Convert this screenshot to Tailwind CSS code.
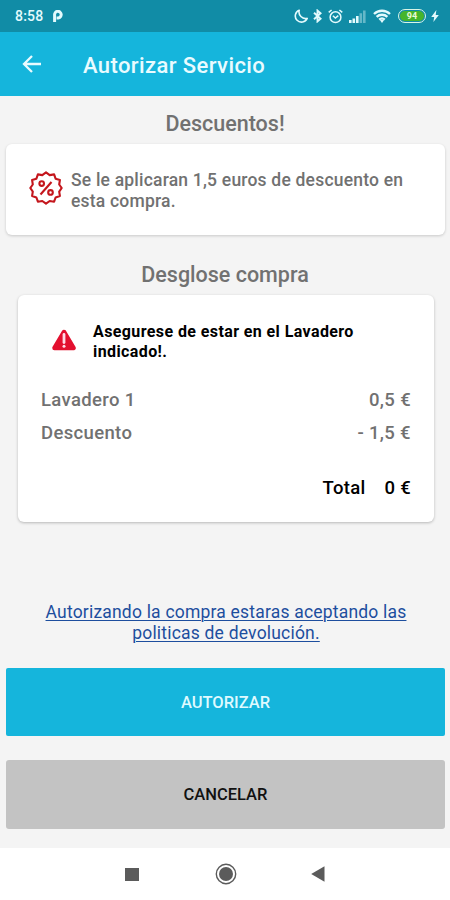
<!DOCTYPE html>
<html lang="es">
<head>
<meta charset="utf-8">
<title>Autorizar Servicio</title>
<script src="https://cdn.jsdelivr.net/npm/@tailwindcss/browser@4"></script>
</head>
<body class="w-[450px] h-[900px] overflow-hidden flex flex-col bg-[#f4f4f4] font-[Roboto,sans-serif] font-medium text-[#717171]">
  <div class="h-8 shrink-0 bg-[#118ca6] text-[#e3fafd] flex items-center pl-[15px] pr-[11px]">
    <span class="text-[14px] tracking-[0.2px] w-[38px] whitespace-nowrap">8:58</span>
    <svg class="w-[10px] h-[12px]" viewBox="0 0 10 12" fill="none" stroke="currentColor" stroke-width="3"><path d="M1.6 12V5A3.3 3.3 0 1 1 5.2 7.9H3.6"/></svg>
    <div class="ml-auto flex items-center">
      <svg class="w-[14px] h-[14px] mr-[5px]" viewBox="0 0 14 14" fill="none" stroke="currentColor" stroke-width="1.6" stroke-linejoin="round"><path d="M5.2 1.2A6.2 6.2 0 1 0 13.2 9.4A6.7 6.7 0 0 1 5.2 1.2Z"/></svg>
      <svg class="w-[9px] h-[14px] mr-[6px]" viewBox="0 0 9 14" fill="none" stroke="currentColor" stroke-width="1.9"><path d="M1 3.8L7.6 9.8L4.5 12.4V1.6L7.6 4.2L1 10.2"/></svg>
      <svg class="w-[15px] h-[15px] mr-[6px]" viewBox="0 0 15 15" fill="none" stroke="currentColor" stroke-width="1.5"><circle cx="7.5" cy="8.2" r="5.4"/><path d="M.7 3.4L3.6 1M14.3 3.4L11.4 1M4.9 6.8L7.4 9L10.3 6.6"/></svg>
      <svg class="w-[17px] h-[13px] mr-[7px]" viewBox="0 0 17 13" fill="currentColor"><path d="M0 10h2.6v3H0zM3.5 8.4h2.6V13H3.5zM7 6h2.6v7H7z"/><path opacity=".4" d="M10.5 3.3h2.6V13h-2.6zM14 .5h2.6V13H14z"/></svg>
      <svg class="w-[18px] h-[14px] mr-[7px]" viewBox="0 0 18 14" fill="none" stroke="currentColor" stroke-width="2.3"><path d="M1 5A11.5 11.5 0 0 1 17 5M3.6 7.9A7.8 7.8 0 0 1 14.4 7.9M6.2 10.6A4.2 4.2 0 0 1 11.8 10.6"/><path d="M9 14L7 11.3Q9 9.8 11 11.3Z" fill="currentColor" stroke="none"/></svg>
      <div class="w-[28px] h-[14px] rounded-full border-[1.5px] border-[#d9f5e6] p-px mr-[5px]"><div class="h-full rounded-full bg-[#46b52c] text-[#e9fbd9] text-[9px] leading-[10.5px] font-bold text-center">94</div></div>
      <svg class="w-[8px] h-[12px]" viewBox="0 0 8 12" fill="currentColor"><path d="M5.4 0L.2 6.9H3.2L2.4 12L7.8 4.9H4.7Z"/></svg>
    </div>
  </div>
  <header class="h-16 shrink-0 bg-[#15b5dc] text-[#e9fbff] flex items-center pl-[22px]">
    <svg class="w-[20px] h-[18px] mr-[41px]" viewBox="0 0 20 18" fill="none" stroke="currentColor" stroke-width="2.3"><path d="M19 9H2.5M10 1L2 9L10 17"/></svg>
    <h1 class="text-[22px] leading-8 pt-[3px] tracking-[0.4px] whitespace-nowrap">Autorizar Servicio</h1>
  </header>
  <main class="h-[752px] shrink-0 flex flex-col px-[6px]">
    <h2 class="pt-[15px] text-[21.5px] leading-[26px] text-center">Descuentos!</h2>
    <section class="mt-[7px] h-[91px] w-[439px] rounded-[6px] bg-white shadow-[0_1px_3px_rgba(0,0,0,0.18)] flex items-start pl-[23px] pt-[26px]">
      <svg class="w-[34px] h-[34px] mr-[8px] mt-[1px]" viewBox="0 0 34 34" fill="none" stroke="#c4161c" stroke-width="2.1" stroke-linejoin="round"><path d="M17 1.3L20.7 4.1L25.1 3.4L26.6 7.7L30.9 9L30.2 13.5L32.7 17L30.2 20.7L30.9 25L26.6 26.5L25.1 30.7L20.7 30L17 32.7L13.3 30L8.9 30.7L7.4 26.5L3.1 25L3.8 20.7L1.3 17L3.8 13.5L3.1 9L7.4 7.7L8.9 3.4L13.3 4.1Z"/><path d="M22.5 11L11.5 23.5"/><circle cx="12.7" cy="12.6" r="2.3"/><circle cx="21.5" cy="21.4" r="2.3"/></svg>
      <p class="text-[17.5px] leading-[21px] tracking-[0.2px] whitespace-nowrap">Se le aplicaran 1,5 euros de descuento en<br>esta compra.</p>
    </section>
    <h2 class="mt-[27px] text-[21.5px] leading-[26px] text-center">Desglose compra</h2>
    <section class="mt-[7px] ml-[12px] w-[416px] h-[227px] rounded-[6px] bg-white shadow-[0_1px_3px_rgba(0,0,0,0.25)] px-[23px] pt-[26px]">
      <div class="flex items-start text-black h-[64px]">
        <svg class="w-[24px] h-[22px] ml-[11px] mt-[8px] mr-[17px]" viewBox="0 0 24 22"><path d="M12 3L21.5 19H2.5Z" fill="#e3102f" stroke="#e3102f" stroke-width="4.5" stroke-linejoin="round"/><path d="M12 5.5V13.5" stroke="#ffdbe6" stroke-width="2.8" stroke-linecap="round"/><circle cx="12" cy="17.3" r="1.5" fill="#ffdbe6"/></svg>
        <p class="text-[16px] leading-5 pt-px font-bold tracking-[0.4px] whitespace-nowrap">Asegurese de estar en el Lavadero<br>indicado!.</p>
      </div>
      <div class="text-[18.5px] leading-[33px] tracking-[0.35px] -mt-px">
        <div class="flex justify-between"><span>Lavadero 1</span><span>0,5 €</span></div>
        <div class="flex justify-between"><span>Descuento</span><span>- 1,5 €</span></div>
      </div>
      <div class="mt-[22px] flex justify-end gap-[19px] text-[18.5px] leading-[33px] tracking-[0.3px] text-black"><span>Total</span><span>0 €</span></div>
    </section>
    <a class="mt-[80px] pl-[2px] text-center text-[17.5px] leading-[21px] font-normal tracking-[0.2px] text-[#1d4e9e] underline decoration-1 underline-offset-2 whitespace-nowrap">Autorizando la compra estaras aceptando las<br>politicas de devolución.</a>
    <button class="mt-[24px] h-[68px] shrink-0 w-[439px] rounded-[2px] bg-[#15b5dc] text-[#dffaff] text-[16.5px] font-medium pt-[3px]">AUTORIZAR</button>
    <button class="mt-[24px] h-[69px] shrink-0 w-[439px] rounded-[3px] bg-[#c3c3c3] text-[#111] text-[16.5px] font-medium pt-[2px]">CANCELAR</button>
  </main>
  <nav class="h-[52px] shrink-0 bg-white flex items-center pl-[125px] text-[#5b5b5b]">
    <div class="w-[14px] h-[13px] bg-current mr-[76px]"></div>
    <svg class="w-[22px] h-[22px] mr-[74px]" viewBox="0 0 22 22" fill="none" stroke="currentColor"><circle cx="11" cy="11" r="9.7" stroke-width="1.4"/><circle cx="11" cy="11" r="7" fill="currentColor" stroke="none"/></svg>
    <svg class="w-[14px] h-[16px]" viewBox="0 0 14 16" fill="currentColor"><path d="M13.5 .3V15.7L.2 8Z"/></svg>
  </nav>
</body>
</html>
